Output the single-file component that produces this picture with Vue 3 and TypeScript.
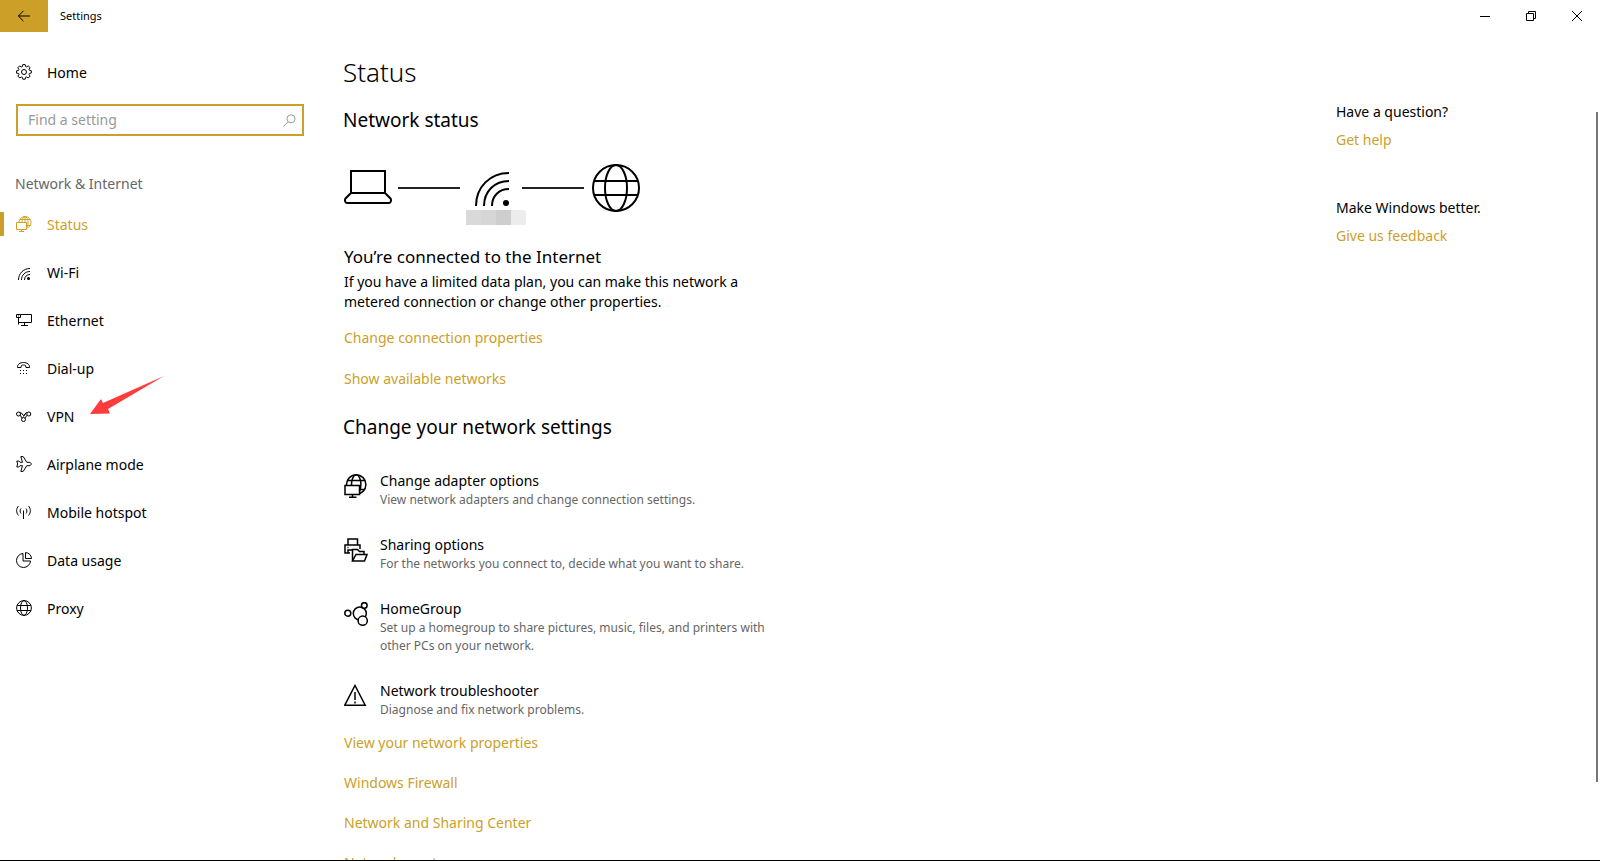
<script setup lang="ts">
import { ref } from 'vue'

interface NavItem {
  id: string
  label: string
}
interface Option {
  id: string
  title: string
  text: string
}

const query = ref('')
const active = ref('status')

const navItems: NavItem[] = [
  { id: 'status', label: 'Status' },
  { id: 'wifi', label: 'Wi-Fi' },
  { id: 'ethernet', label: 'Ethernet' },
  { id: 'dialup', label: 'Dial-up' },
  { id: 'vpn', label: 'VPN' },
  { id: 'airplane', label: 'Airplane mode' },
  { id: 'hotspot', label: 'Mobile hotspot' },
  { id: 'data', label: 'Data usage' },
  { id: 'proxy', label: 'Proxy' },
]

const options: Option[] = [
  { id: 'adapter', title: 'Change adapter options', text: 'View network adapters and change connection settings.' },
  { id: 'sharing', title: 'Sharing options', text: 'For the networks you connect to, decide what you want to share.' },
  { id: 'homegroup', title: 'HomeGroup', text: 'Set up a homegroup to share pictures, music, files, and printers with other PCs on your network.' },
  { id: 'trouble', title: 'Network troubleshooter', text: 'Diagnose and fix network problems.' },
]

const connectionLinks = ['Change connection properties', 'Show available networks']
const moreLinks = ['View your network properties', 'Windows Firewall', 'Network and Sharing Center', 'Network reset']
</script>

<template>
  <div class="window">
    <header class="titlebar">
      <button class="back" type="button" aria-label="Back">
        <svg width="14" height="12" viewBox="0 0 14 12"><path d="M13 6H1.500M6.500 .8 1.300 6l5.200 5.200" /></svg>
      </button>
      <span class="app-name">Settings</span>
      <div class="controls">
        <button type="button" aria-label="Minimize">
          <svg width="10" height="10" viewBox="0 0 10 10"><path d="M0 5.500h10" /></svg>
        </button>
        <button type="button" aria-label="Restore">
          <svg width="10" height="10" viewBox="0 0 10 10"><path d="M.5 2.500h7v7h-7zM2.500 2.500v-2h7v7h-2" /></svg>
        </button>
        <button type="button" aria-label="Close">
          <svg width="10" height="10" viewBox="0 0 10 10"><path d="m0 0 10 10M10 0 0 10" /></svg>
        </button>
      </div>
    </header>

    <div class="body">
      <aside class="sidebar">
        <a class="nav-link" href="#home">
          <svg class="icon" viewBox="0 0 16 16">
            <circle cx="8" cy="8" r="2.500" />
            <path d="M6.800 .6h2.400l.4 1.900 1 .4 1.600-1.100 1.900 1.900-1.100 1.600.4 1 1.900.4v2.400l-1.900.4-.4 1 1.100 1.600-1.900 1.900-1.600-1.100-1 .4-.4 1.900H6.800l-.4-1.900-1-.4-1.600 1.100-1.900-1.900 1.100-1.600-.4-1L.6 9.200V6.800l1.900-.4.4-1-1.100-1.600 1.900-1.900 1.600 1.100 1-.4z" />
          </svg>
          <span>Home</span>
        </a>

        <div class="search">
          <input v-model="query" type="text" aria-label="Find a setting" placeholder="Find a setting" />
          <svg width="13" height="13" viewBox="0 0 13 13"><circle cx="8" cy="4.800" r="4" /><path d="M5.200 7.700.5 12.400" /></svg>
        </div>

        <h2 class="group">Network &amp; Internet</h2>

        <nav>
          <a
            v-for="item in navItems"
            :key="item.id"
            class="nav-link"
            :class="{ active: item.id === active }"
            :href="'#' + item.id"
            @click="active = item.id"
          >
            <svg class="icon" viewBox="0 0 16 16">
              <template v-if="item.id === 'status'">
                <circle cx="9" cy="6.500" r="6" />
                <ellipse cx="9" cy="6.500" rx="3" ry="6" />
                <path d="M4 3.500h10M10 9.500h4.500M9 .5v6" />
                <path class="cover" d="M.5 6.500h10v7H.5z" />
                <path d="M5.500 13.500v2M3 15.500h5" />
              </template>
              <template v-else-if="item.id === 'wifi'">
                <path d="M2.500 16C2.500 9.500 7.500 4.500 14 4.500M5.500 16c0-4.900 3.600-8.500 8.500-8.500M8.500 16c0-3.200 2.300-5.500 5.500-5.500" />
                <circle class="solid" cx="12.500" cy="14.500" r="1.500" />
              </template>
              <template v-else-if="item.id === 'ethernet'">
                <path d="M4.500 2.500h11v8h-11M.5 2.500h4v3h-4zM2.500 5.500v7M2.500 10.500h3M8.500 10.500v3M5 13.500h7M2 4h1" />
              </template>
              <template v-else-if="item.id === 'dialup'">
                <path d="M1.500 7.500c-.5-3 2.500-5 6-5s6.500 2 6 5H10l-.5-2c-1.400-.7-2.800-.7-4 0l-.5 2z" />
                <path class="dots" d="M4 10.500h7M4 13.500h7" />
              </template>
              <template v-else-if="item.id === 'vpn'">
                <circle cx="2.500" cy="6" r="2" /><circle cx="12.800" cy="6" r="2" /><circle cx="7.500" cy="11.500" r="2" />
                <path d="M4.200 4.500c2 0 2.200 3 3.600 3S9 4.500 11 4.500M4 7.500c1.800 0 1 2.500 2 2.700M11.200 7.500c-1.800 0-1 2.500-2.200 2.700M7.500 8.500l1.800-3" />
              </template>
              <template v-else-if="item.id === 'airplane'">
                <path d="M.8 5h2L4 6.300h2.500L4.800.6h2.400l3.600 5.700H14L15.500 8 14 9.700h-3.200l-3.600 5.700H4.800l1.700-5.700H4L2.800 11h-2l.8-3z" />
              </template>
              <template v-else-if="item.id === 'hotspot'">
                <path d="M7.500 6.500V15M5 4.500c-1.200 1.500-1.200 3.500 0 5M10 4.500c1.200 1.500 1.200 3.500 0 5M2.500 2C0 4.700 0 8.500 2.500 11.500M12.500 2c2.500 2.700 2.500 6.500 0 9.500" />
              </template>
              <template v-else-if="item.id === 'data'">
                <path d="M7 1.500a7 7 0 1 0 7.500 7.500H7zM9.500.6v5.900h6A6.100 6.100 0 0 0 9.500.6z" />
              </template>
              <template v-else>
                <circle cx="8" cy="8" r="7.400" /><ellipse cx="8" cy="8" rx="3.500" ry="7.400" /><path d="M1.200 5.500h13.600M1.200 10.500h13.600" />
              </template>
            </svg>
            <span>{{ item.label }}</span>
            <svg v-if="item.id === 'vpn'" class="pointer" width="74" height="39" viewBox="0 0 74 39">
              <path d="M0 38 11 23l2 4L74 0 18 33l2 4.500z" />
            </svg>
          </a>
        </nav>
      </aside>

      <main class="content">
        <h1>Status</h1>
        <h2>Network status</h2>

        <div class="diagram">
          <svg width="48" height="48" viewBox="0 0 48 48">
            <path d="M7 7h34v22H7zM7 29l-5.500 5.500c-1 1.500-.5 4.500 1.500 4.500h42c2 0 2.500-3 1.500-4.500L41 29" />
          </svg>
          <span class="wire"></span>
          <div class="network">
            <svg width="48" height="48" viewBox="0 0 48 48">
              <path d="M8 42C8 23 22 9 41 9M16 42c0-14.500 10.500-25 25-25M24 42c0-10 7-17 17-17" />
              <circle class="solid" cx="38" cy="39" r="3" />
            </svg>
            <span class="mask"><i></i><i></i><i></i><i></i></span>
          </div>
          <span class="wire"></span>
          <svg width="48" height="48" viewBox="0 0 48 48">
            <circle cx="24" cy="24" r="23" /><ellipse cx="24" cy="24" rx="11" ry="23" /><path d="M2 17h44M2 31h44" />
          </svg>
        </div>

        <h3>You’re connected to the Internet</h3>
        <p class="summary">If you have a limited data plan, you can make this network a metered connection or change other properties.</p>
        <ul class="links first">
          <li v-for="label in connectionLinks" :key="label"><a href="#">{{ label }}</a></li>
        </ul>

        <h2>Change your network settings</h2>
        <ul class="options">
          <li v-for="option in options" :key="option.id">
            <a href="#">
              <svg width="24" height="24" viewBox="0 0 24 24">
                <template v-if="option.id === 'adapter'">
                  <circle cx="12.200" cy="10.500" r="9.700" />
                  <ellipse cx="12.200" cy="10.500" rx="4.700" ry="9.700" />
                  <path d="M3.500 6.500H21M15 15.500h6" />
                  <path class="cover" d="M1 11.500h14.500v9H1z" />
                  <path d="M8.500 20.500v3M5 23.200h7.500" />
                </template>
                <template v-else-if="option.id === 'sharing'">
                  <path d="M4 7V1h9.500v6M6 15H1V7h15v4M4 15v-3h4M3.500 9.500h1" />
                  <path d="M8.500 23V11.500h5l2 2H20v3M8.500 23l3.500-6.500h11L20.500 23z" />
                </template>
                <template v-else-if="option.id === 'homegroup'">
                  <circle cx="15.800" cy="11.500" r="6.500" />
                  <circle class="cover" cx="3.800" cy="11.200" r="3" />
                  <circle class="cover" cx="20.300" cy="3.500" r="2.800" />
                  <circle class="cover" cx="18.700" cy="18.700" r="4.600" />
                </template>
                <template v-else>
                  <path d="M11 1.500 21.200 21.200H.8zM11 8v8M11 17.500v2" />
                </template>
              </svg>
              <span class="option-text">
                <span class="option-title">{{ option.title }}</span>
                <span class="option-desc">{{ option.text }}</span>
              </span>
            </a>
          </li>
        </ul>
        <ul class="links more">
          <li v-for="label in moreLinks" :key="label"><a href="#">{{ label }}</a></li>
        </ul>
      </main>

      <aside class="help">
        <section>
          <p>Have a question?</p>
          <a href="#">Get help</a>
        </section>
        <section>
          <p>Make Windows better.</p>
          <a href="#">Give us feedback</a>
        </section>
      </aside>
      <div class="scroll-thumb"></div>
    </div>
  </div>
</template>

<style>
body {
  margin: 0;
}
</style>

<style scoped>
.window {
  --accent: #cca028;
  display: flex;
  flex-direction: column;
  box-sizing: border-box;
  height: 100vh;
  overflow: hidden;
  border-bottom: 1px solid #000;
  background: #fff;
  color: #000;
  font: 14px/20px "Noto Sans", "Open Sans", sans-serif;
}
h1, h2, h3, p, ul {
  margin: 0;
  padding: 0;
  font-weight: 400;
  list-style: none;
}
a {
  color: var(--accent);
  text-decoration: none;
}
button {
  display: flex;
  align-items: center;
  justify-content: center;
  padding: 0;
  border: 0;
  background: none;
}
svg {
  flex: none;
  fill: none;
  stroke: currentColor;
}
.solid {
  fill: currentColor;
  stroke: none;
}
.cover {
  fill: #fff;
}

.titlebar {
  display: flex;
  flex: none;
  height: 32px;
}
.back {
  width: 48px;
  background: var(--accent);
  color: #000;
}
.app-name {
  padding-left: 12px;
  font-size: 11px;
  line-height: 32px;
}
.controls {
  display: flex;
  margin-left: auto;
}
.controls button {
  width: 46px;
  color: #000;
}

.body {
  position: relative;
  display: flex;
  flex: 1;
  min-height: 0;
}
.sidebar {
  flex: none;
  width: 320px;
  padding-top: 16px;
}
.nav-link {
  position: relative;
  display: flex;
  align-items: center;
  gap: 15px;
  height: 48px;
  padding-left: 16px;
  color: #000;
}
.nav-link span {
  padding-top: 2px;
}
.nav-link.active {
  color: var(--accent);
}
.nav-link.active::before {
  content: "";
  position: absolute;
  left: 0;
  width: 4px;
  height: 24px;
  background: var(--accent);
}
.icon {
  width: 16px;
  height: 16px;
}
.dots {
  stroke-dasharray: 1 2;
}
.pointer {
  position: absolute;
  left: 90px;
  top: -16px;
  z-index: 1;
  fill: #ff3b3b;
  stroke: none;
}
.search {
  display: flex;
  align-items: center;
  box-sizing: border-box;
  height: 32px;
  margin: 8px 16px 32px;
  padding: 0 6px 0 10px;
  border: 2px solid var(--accent);
  color: #999;
}
.search input {
  flex: 1;
  min-width: 0;
  padding: 0;
  border: 0;
  outline: 0;
  background: none;
  color: #000;
  font: inherit;
}
.search input::placeholder {
  color: #999;
  opacity: 1;
}
.group {
  padding-left: 15px;
  color: #666;
  font-size: 14px;
  line-height: 32px;
}

.content {
  flex: 1;
  min-width: 0;
  padding: 20px 24px 0 23px;
}
h1 {
  font-size: 26px;
  font-weight: 300;
  line-height: 40px;
}
.content h2 {
  font-size: 19px;
  line-height: 28px;
}
h1 + h2 {
  margin-top: 14px;
}
.diagram {
  display: flex;
  align-items: flex-start;
  height: 64px;
  margin: 30px 0 17px 1px;
  stroke-width: 2px;
}
.wire {
  width: 62px;
  height: 2px;
  margin: 23px 6px 0;
  background: #222;
}
.network {
  display: flex;
  flex-direction: column;
  width: 50px;
}
.wire + svg,
.network svg {
  margin-left: 2px;
}
.mask {
  display: flex;
  margin-top: -2px;
}
.mask i {
  flex: none;
  width: 15px;
  height: 15px;
  background: #d9d9d9;
}
.mask i:nth-child(2) {
  background: #d6d6d6;
}
.mask i:nth-child(3) {
  background: #cecece;
}
.mask i:nth-child(4) {
  border-top-right-radius: 4px;
  background: #ececec;
}
h3 {
  padding-left: 1px;
  font-size: 17px;
  line-height: 24px;
}
.summary {
  max-width: 420px;
  padding: 3px 0 0 1px;
}
.links {
  padding-left: 1px;
}
.links.first {
  display: grid;
  gap: 21px;
  padding-top: 16px;
  padding-bottom: 24px;
}
.options {
  display: grid;
  gap: 26px;
  padding: 30px 0 0 1px;
}
.options a {
  display: flex;
  gap: 12px;
  color: #000;
}
.options svg {
  margin-top: 3px;
  stroke-width: 1.5px;
}
.option-text {
  display: flex;
  flex-direction: column;
  max-width: 400px;
}
.option-desc {
  color: #666;
  font-size: 12px;
  line-height: 18px;
}
.links.more {
  display: grid;
  gap: 20px;
  padding-top: 14px;
}

.help {
  display: flex;
  flex: none;
  flex-direction: column;
  gap: 48px;
  width: 264px;
  padding-top: 70px;
}
.help p {
  margin-bottom: 8px;
}
.help a {
  display: inline-block;
}
.scroll-thumb {
  position: absolute;
  right: 2px;
  top: 80px;
  bottom: 78px;
  width: 2px;
  background: #767676;
}
</style>
